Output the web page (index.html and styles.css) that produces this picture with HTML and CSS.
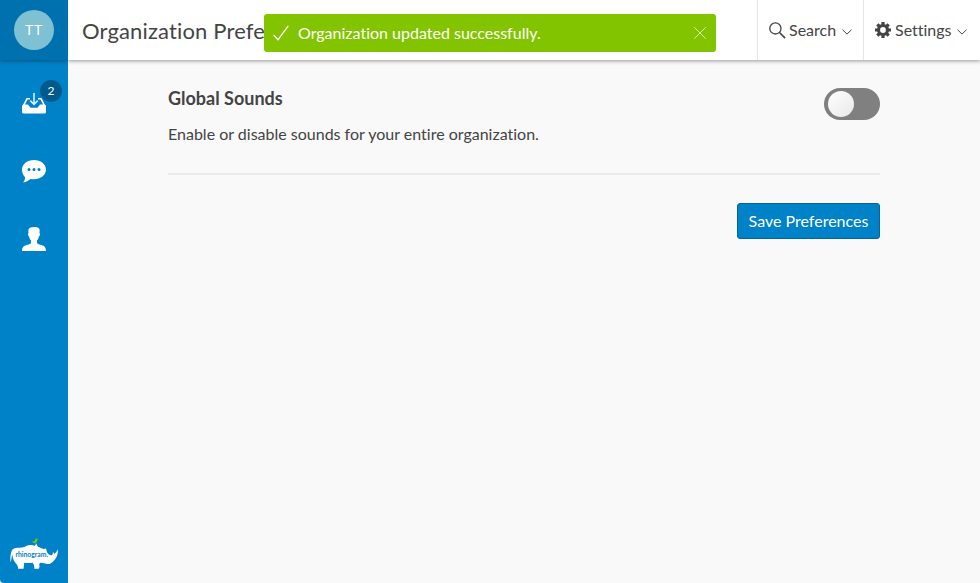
FILE: index.html
```html
<!DOCTYPE html>
<html lang="en">
<head>
<meta charset="utf-8">
<title>Organization Preferences</title>
<link rel="stylesheet" href="styles.css">
</head>
<body>
<div class="app">
  <aside class="sidebar">
    <div class="profile"><div class="avatar">TT</div></div>
    <nav class="nav">
      <a class="nav-item">
        <svg width="24" height="22" viewBox="0 0 24 22"><path d="M8 6.800H5L1 14.500M16 6.800h3l4 7.700" fill="none" stroke="#fff" stroke-width="1.600"/><path d="M0 13.500 2 12.500H6l2.500 3.300h7l2.500-3.300h4l2 1V20a1.500 1.500 0 0 1-1.500 1.500h-21A1.500 1.500 0 0 1 0 20z" fill="#fff"/><path d="M12 1v10.500M8.300 8.600l3.700 3.700 3.700-3.700" fill="none" stroke="#d8edf8" stroke-width="1.600"/></svg>
        <span class="badge">2</span>
      </a>
      <a class="nav-item">
        <svg width="24" height="23" viewBox="0 0 24 23"><path d="M12 0c6.700 0 12 4.200 12 9.600s-5.300 9.700-12 9.700c-1.300 0-2.500-.1-3.600-.4C6.300 20.800 4 22 1.200 22.500c1.100-1.500 1.900-3.200 2-5C1.200 15.500 0 12.900 0 9.600 0 4.200 5.300 0 12 0z" fill="#fff"/><g fill="#0082c8"><circle cx="7" cy="9.600" r="1.500"/><circle cx="12" cy="9.600" r="1.500"/><circle cx="17" cy="9.600" r="1.500"/></g></svg>
      </a>
      <a class="nav-item">
        <svg width="24" height="24" viewBox="0 0 24 24"><path d="M12 0c2.800 0 4.700.6 5.400 2 .5 1.100.1 2.800 0 4 .8.300.7 1.600.3 2.500-.2.600-.5.900-.8 1-.3 1.700-.9 3-1.900 4v2.400c.7 1.100 2.600 1.500 4.400 2.100 3.200 1 4.400 2.200 4.600 6H0c.2-3.800 1.400-5 4.600-6 1.800-.6 3.700-1 4.400-2.100v-2.400c-1-1-1.600-2.300-1.900-4-.4-.1-.7-.5-.8-1-.4-.9-.5-2.200.3-2.500-.2-1.200-.5-2.900.1-4C7.300.8 9.200 0 12 0z" fill="#fff"/></svg>
      </a>
    </nav>
    <svg class="logo" width="48" height="33" viewBox="0 0 48 33">
      <path d="M.6 25.500C0 20 .6 13.500 3.500 11.800 6 10.300 9 11 12 10.500c3.500-.6 5-2.600 8.500-2.600 1.900 0 3 .3 4.300 1.100L26.300 6.500l1.500 3.200c2.500.6 3.500 1.800 5.700 2.300l2.600-.6.800 3.600c1.400 2.200 3 3.500 4.700 3.300 1.200-.2 1.200-2 1.400-3.500l1.200 2.200c1.700-1.200 2.800-2.700 3.500-4.800.8 4.500-1.200 9.300-4.600 12.200-2.200 1.900-3.600 2.900-5.800 2.500-2.300-.4-4.500-1.500-6.500-1.200-1.700.3-1.800 2-1.200 4l-.8 2h-4.500c.2-2.300-.3-4.500-1.800-6-2.800.4-5.500.4-8.300 0l-.6 6H8c.2-2.500-.8-4-2.600-6C3.500 23.500 2.600 21 2.500 17.500 1.500 19.800 1.600 22.500.6 25.500z" fill="#fff"/>
      <path d="M21.800 4.500c1.700.2 2.700-.3 3.300-1.600.4-.9 1-1.400 1.900-1.300l1.200.6-1 .5c.2 1.500-.5 2.600-1.700 3l.6 1.600-1.500-1.400c-1.200 0-2.200-.5-2.800-1.400z" fill="#83c400"/>
      <text x="5.500" y="20" class="logo-text" textLength="32.500" lengthAdjust="spacingAndGlyphs">rhinogram.</text>
    </svg>
  </aside>
  <div class="main">
    <header class="topbar">
      <h1 class="title">Organization Preferences</h1>
      <div class="action search">
        <svg width="17" height="17" viewBox="0 0 17 17" fill="none" stroke="#444"><circle cx="6.400" cy="6.400" r="5.600" stroke-width="1.300"/><path d="m10.500 10.500 5.600 5.600" stroke-width="1.700"/></svg>
        <span>Search</span>
        <svg class="chevron" width="10" height="6" viewBox="0 0 10 6"><path d="m.5.700 4.500 4.400L9.500.700" fill="none" stroke="#444"/></svg>
      </div>
      <div class="action settings">
        <svg width="16" height="16" viewBox="0 0 16 16"><circle cx="8" cy="8" r="4.500" fill="none" stroke="#444" stroke-width="3.200"/><g stroke="#444" stroke-width="3.200"><path d="M8 0v3M8 13v3M0 8h3M13 8h3M2.300 2.300l2.200 2.200M11.500 11.500l2.200 2.200M2.300 13.700l2.200-2.200M11.500 4.500l2.200-2.200"/></g></svg>
        <span>Settings</span>
        <svg class="chevron" width="10" height="6" viewBox="0 0 10 6"><path d="m.5.700 4.500 4.400L9.500.700" fill="none" stroke="#444"/></svg>
      </div>
    </header>
    <main class="content">
      <section class="preference">
        <div>
          <h2 class="pref-title">Global Sounds</h2>
          <p class="pref-text">Enable or disable sounds for your entire organization.</p>
        </div>
        <div class="toggle"><div class="knob"></div></div>
      </section>
      <div class="buttons"><button class="save">Save Preferences</button></div>
    </main>
  </div>
  <div class="toast">
    <svg width="16" height="16" viewBox="0 0 16 16"><path d="M.6 10 5 14.700 15.300.8" fill="none" stroke="#fff" stroke-width="1.300"/></svg>
    <span class="toast-text">Organization updated successfully.</span>
    <svg width="12" height="12" viewBox="0 0 12 12"><path d="m.3.300 11.400 11.400M11.700.300.300 11.700" fill="none" stroke="#d8edb0"/></svg>
  </div>
</div>
</body>
</html>
```
FILE: styles.css
```css
* { box-sizing: border-box; }
body { margin: 0; background: #f9f9f9; color: #444; font: 16px/24px Lato, sans-serif; font-variant-ligatures: none; }
svg { display: block; flex: none; }
.app { display: flex; height: 583px; overflow: hidden; }
.sidebar { display: flex; flex-direction: column; align-items: center; width: 68px; flex: none; background: #0082c8; border-bottom-left-radius: 4px; }
.profile { display: flex; align-items: center; justify-content: center; width: 68px; height: 60px; background: #0071af; box-shadow: 0 1px 4px rgba(0, 0, 0, .4); clip-path: inset(0 0 -8px 0); }
.avatar { width: 40px; height: 40px; border-radius: 50%; background: #80c0d3; color: #fff; font-size: 14px; line-height: 40px; text-align: center; letter-spacing: .8px; }
.nav { flex: 1; padding-top: 9px; }
.nav-item { position: relative; display: flex; align-items: center; justify-content: center; width: 68px; height: 68px; }
.nav-item:nth-child(2) svg { margin-top: 1px; }
.nav-item:nth-child(3) svg { margin-top: -1px; }
.badge { position: absolute; left: 40px; top: 11px; width: 22px; height: 22px; border-radius: 50%; background: #005b8c; color: #fff; font-size: 12px; line-height: 22px; text-align: center; }
.logo { margin: 0 0 13px; overflow: visible; }
.logo-text { font: bold 7.5px Lato, sans-serif; fill: #0082c8; }
.main { flex: 1; min-width: 0; }
.topbar { display: flex; height: 60px; background: #fff; box-shadow: 0 1px 4px rgba(0, 0, 0, .4); clip-path: inset(0 0 -8px 0); }
.title { flex: 1; margin: 0; padding-left: 14px; font-size: 22px; font-weight: 400; line-height: 62px; letter-spacing: .15px; white-space: nowrap; }
.action { display: flex; align-items: center; border-left: 1px solid #e5e5e5; padding: 0 11px; }
.action span { margin-left: 3px; }
.search .chevron { margin-left: 6px; }
.settings span { margin-left: 4px; }
.search { width: 106px; }
.settings { width: 117px; }
.chevron { margin: 3px 0 0 5px; }
.content { padding: 28px 100px 0; }
.preference { display: flex; justify-content: space-between; height: 87px; border-bottom: 2px solid #ebebeb; }
.pref-title { margin: -2px 0 12px; font-size: 18px; font-weight: 700; line-height: 24px; }
.pref-text { margin: 0; }
.toggle { width: 56px; height: 32px; padding: 3px 4px; border-radius: 16px; background: #808080; }
.knob { width: 26px; height: 26px; border-radius: 50%; background: linear-gradient(135deg, #fff, #e8e8e8); }
.buttons { display: flex; justify-content: flex-end; padding-top: 28px; }
.save { width: 143px; height: 36px; padding: 0; border: 1px solid #00659b; border-radius: 3px; background: #0082c8; color: #fff; font: 16px/34px Lato, sans-serif; white-space: nowrap; }
.toast { position: absolute; left: 264px; top: 14px; display: flex; align-items: center; width: 452px; height: 38px; padding: 0 10px 0 9px; border-radius: 3px; background: #83c400; color: #fff; }
.toast-text { flex: 1; margin-left: 9px; }
```
